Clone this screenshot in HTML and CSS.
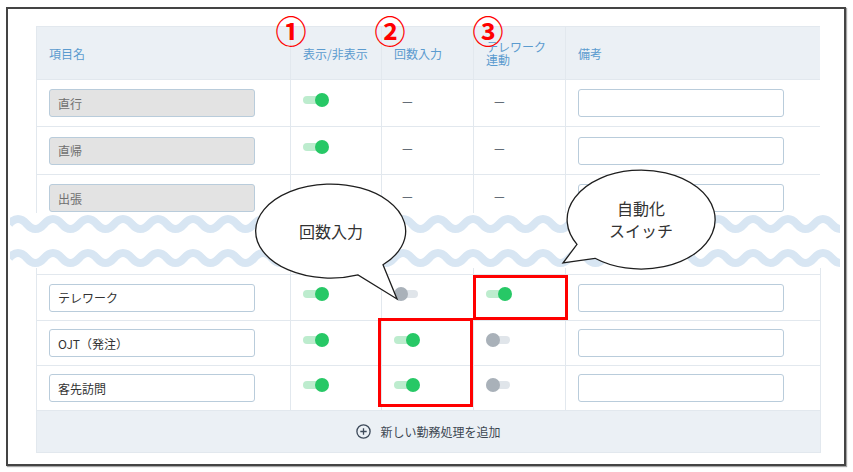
FILE: index.html
```html
<!DOCTYPE html>
<html lang="ja">

<head>
    <meta charset="UTF-8">
    <meta name="viewport" content="width=device-width, initial-scale=1.0">
    <title>勤務処理設定</title>
    <link rel="stylesheet" href="styles.css">
</head>

<body>
    <div class="page">
        <div class="frame">
            <div class="sheet">
                <!-- upper part of the list, cut off by the break -->
                <div class="part part-top">
                    <table class="grid">
                        <colgroup>
                            <col class="c-name">
                            <col class="c-show">
                            <col class="c-count">
                            <col class="c-tele">
                            <col class="c-note">
                        </colgroup>
                        <thead>
                            <tr class="head">
                                <th>項目名</th>
                                <th>表示/非表示</th>
                                <th>回数入力</th>
                                <th>テレワーク連動</th>
                                <th>備考</th>
                            </tr>
                        </thead>
                        <tbody>
                            <tr class="row-a">
                                <td><input class="field locked" type="text" value="直行" readonly></td>
                                <td><span class="switch on"></span></td>
                                <td><span class="dash">—</span></td>
                                <td><span class="dash">—</span></td>
                                <td><input class="field" type="text"></td>
                            </tr>
                            <tr class="row-a tall">
                                <td><input class="field locked" type="text" value="直帰" readonly></td>
                                <td><span class="switch on"></span></td>
                                <td><span class="dash">—</span></td>
                                <td><span class="dash">—</span></td>
                                <td><input class="field" type="text"></td>
                            </tr>
                            <tr class="row-a">
                                <td><input class="field locked" type="text" value="出張" readonly></td>
                                <td><span class="switch on"></span></td>
                                <td><span class="dash">—</span></td>
                                <td><span class="dash">—</span></td>
                                <td><input class="field" type="text"></td>
                            </tr>
                        </tbody>
                    </table>
                </div>

                <div class="break">
                    <svg class="waves" width="830" height="55" viewBox="0 0 830 55">
                        <path id="wave" d="M-0.75,11 q8.75,-10 17.5,0 t17.5,0 t17.5,0 t17.5,0 t17.5,0 t17.5,0 t17.5,0 t17.5,0 t17.5,0 t17.5,0 t17.5,0 t17.5,0 t17.5,0 t17.5,0 t17.5,0 t17.5,0 t17.5,0 t17.5,0 t17.5,0 t17.5,0 t17.5,0 t17.5,0 t17.5,0 t17.5,0 t17.5,0 t17.5,0 t17.5,0 t17.5,0 t17.5,0 t17.5,0 t17.5,0 t17.5,0 t17.5,0 t17.5,0 t17.5,0 t17.5,0 t17.5,0 t17.5,0 t17.5,0 t17.5,0 t17.5,0 t17.5,0 t17.5,0 t17.5,0 t17.5,0 t17.5,0 t17.5,0 t17.5,0" />
                        <use href="#wave" transform="translate(0,34)" />
                    </svg>
                </div>

                <!-- lower part of the list -->
                <div class="part part-bottom">
                    <table class="grid">
                        <colgroup>
                            <col class="c-name">
                            <col class="c-show">
                            <col class="c-count">
                            <col class="c-tele">
                            <col class="c-note">
                        </colgroup>
                        <tbody>
                            <tr class="sliver">
                                <td></td><td></td><td></td><td></td><td></td>
                            </tr>
                            <tr class="row-b first">
                                <td><input class="field" type="text" value="テレワーク"></td>
                                <td><span class="switch on"></span></td>
                                <td><span class="switch"></span></td>
                                <td><span class="switch on"></span></td>
                                <td><input class="field" type="text"></td>
                            </tr>
                            <tr class="row-b">
                                <td><input class="field" type="text" value="OJT（発注）"></td>
                                <td><span class="switch on"></span></td>
                                <td><span class="switch on"></span></td>
                                <td><span class="switch"></span></td>
                                <td><input class="field" type="text"></td>
                            </tr>
                            <tr class="row-b">
                                <td><input class="field" type="text" value="客先訪問"></td>
                                <td><span class="switch on"></span></td>
                                <td><span class="switch on"></span></td>
                                <td><span class="switch"></span></td>
                                <td><input class="field" type="text"></td>
                            </tr>
                            <tr class="foot">
                                <td colspan="5">
                                    <button class="add-button" type="button">
                                        <svg class="add-icon" width="15" height="15" viewBox="0 0 15 15">
                                            <circle cx="7.5" cy="7.5" r="6.6" />
                                            <path d="M7.5,4.3 V10.7 M4.3,7.5 H10.7" />
                                        </svg>
                                        新しい勤務処理を追加
                                    </button>
                                </td>
                            </tr>
                        </tbody>
                    </table>
                </div>
            </div>
        </div>

        <!-- annotations drawn over the screenshot -->
        <span class="mark mark-1">①</span>
        <span class="mark mark-2">②</span>
        <span class="mark mark-3">③</span>

        <div class="highlight hl-auto"></div>
        <div class="highlight hl-count"></div>

        <div class="bubble bubble-count">
            <svg width="160" height="125" viewBox="0 0 160 125">
                <path d="M133,84.8 A75,47 0 1 0 108,94.9 L147,119 Z" />
            </svg>
            <span class="bubble-label">回数入力</span>
        </div>
        <div class="bubble bubble-auto">
            <svg width="170" height="110" viewBox="0 0 170 110">
                <path d="M40,93.3 A74,49.5 0 1 0 22,79.3 L8,98 Z" />
            </svg>
            <span class="bubble-label">自動化<br>スイッチ</span>
        </div>
    </div>
</body>

</html>
```

FILE: styles.css
```css
/* CSS styles */
body {
    margin: 0;
    padding: 0;
    font-family: 'Noto Sans CJK JP', 'Noto Sans', sans-serif;
    background-color: #fff;
    color: #333;
}

.page {
    position: relative;
    width: 853px;
    height: 472px;
    overflow: hidden;
}

.frame {
    margin: 7px 0 0 6px;
    width: 808px;
    height: 438px;
    padding: 17px 0 0 28px;
    border: 2px solid #444;
    box-shadow: 1px 1px 1px rgba(0, 0, 0, 0.35);
    background-color: #fff;
}

.sheet {
    width: 784px;
}

.part-top {
    height: 187px;
    overflow: hidden;
}

.break {
    height: 55px;
    margin: 0 -26px;
}

.waves {
    display: block;
}

.waves path,
.waves use {
    fill: none;
    stroke: #d8e6f3;
    stroke-width: 8;
}

/* table */
.grid {
    width: 784px;
    table-layout: fixed;
    border-collapse: collapse;
    background-color: #fff;
}

.c-name {
    width: 254px;
}

.c-show {
    width: 91px;
}

.c-count {
    width: 92px;
}

.c-tele {
    width: 92px;
}

.c-note {
    width: 255px;
}

.grid th,
.grid td {
    padding: 0 12px;
    border: 1px solid #e2e8ee;
    text-align: left;
    vertical-align: middle;
}

.grid th {
    height: 52px;
    background-color: #ebf0f5;
    color: #5b9bcf;
    font-size: 12px;
    font-weight: normal;
    line-height: 13px;
}

.row-a td {
    height: 46px;
}

.row-a.tall td {
    height: 47px;
}

.sliver td {
    height: 6px;
    border-top: none;
}

.row-b td {
    height: 44px;
}

.row-b.first td {
    height: 45px;
}

.foot td {
    height: 41px;
    background-color: #ebf0f5;
    text-align: center;
}

.field {
    display: block;
    box-sizing: border-box;
    width: 206px;
    height: 28px;
    padding: 0 8px;
    border: 1px solid #b9ccdb;
    border-radius: 3px;
    background-color: #fff;
    font-family: inherit;
    font-size: 12px;
    color: #333;
    outline: none;
}

.field.locked {
    background-color: #e3e3e3;
    color: #707070;
}

.dash {
    display: block;
    margin: 0 0 5px 8px;
    font-size: 12px;
    line-height: 14px;
    color: #3f4b58;
}

/* toggle switch */
.switch {
    display: block;
    position: relative;
    width: 26px;
    height: 14px;
    margin-bottom: 7px;
}

.switch::before {
    content: "";
    position: absolute;
    left: 0;
    top: 3px;
    width: 24px;
    height: 8px;
    border-radius: 4px;
    background-color: #e0e5ea;
}

.switch::after {
    content: "";
    position: absolute;
    left: 0;
    top: 0;
    width: 14px;
    height: 14px;
    border-radius: 50%;
    background-color: #a9b1b9;
}

.switch.on::before {
    background-color: #bdecce;
}

.switch.on::after {
    left: auto;
    right: 0;
    background-color: #27c866;
}

.add-button {
    display: inline-flex;
    align-items: center;
    gap: 9px;
    padding: 0;
    border: none;
    background: none;
    font-family: inherit;
    font-size: 12px;
    color: #3d4752;
    cursor: pointer;
}

.add-icon circle,
.add-icon path {
    fill: none;
    stroke: #3d4a5a;
    stroke-width: 1.3;
}

/* annotations */
.mark {
    position: absolute;
    top: 16px;
    width: 36px;
    height: 27px;
    margin-left: -18px;
    font-size: 31px;
    font-weight: bold;
    line-height: 27px;
    text-align: center;
    color: #ff0000;
}

.mark-1 {
    left: 291px;
}

.mark-2 {
    left: 390px;
}

.mark-3 {
    left: 488px;
}

.highlight {
    position: absolute;
    box-sizing: border-box;
    border: 3px solid #ff0000;
}

.hl-auto {
    left: 473px;
    top: 275px;
    width: 95px;
    height: 45px;
}

.hl-count {
    left: 378px;
    top: 318px;
    width: 95px;
    height: 89px;
}

.bubble {
    position: absolute;
}

.bubble svg {
    display: block;
}

.bubble path {
    fill: #fff;
    stroke: #1e1e1e;
    stroke-width: 1.3;
}

.bubble-label {
    position: absolute;
    display: flex;
    align-items: center;
    justify-content: center;
    text-align: center;
    font-size: 16px;
    line-height: 22px;
    color: #333;
}

.bubble-count {
    left: 250px;
    top: 180px;
    width: 160px;
    height: 125px;
}

.bubble-count .bubble-label {
    left: 6px;
    top: 4px;
    width: 150px;
    height: 94px;
}

.bubble-auto {
    left: 555px;
    top: 165px;
    width: 170px;
    height: 110px;
}

.bubble-auto .bubble-label {
    left: 12px;
    top: 4px;
    width: 148px;
    height: 99px;
}
```
